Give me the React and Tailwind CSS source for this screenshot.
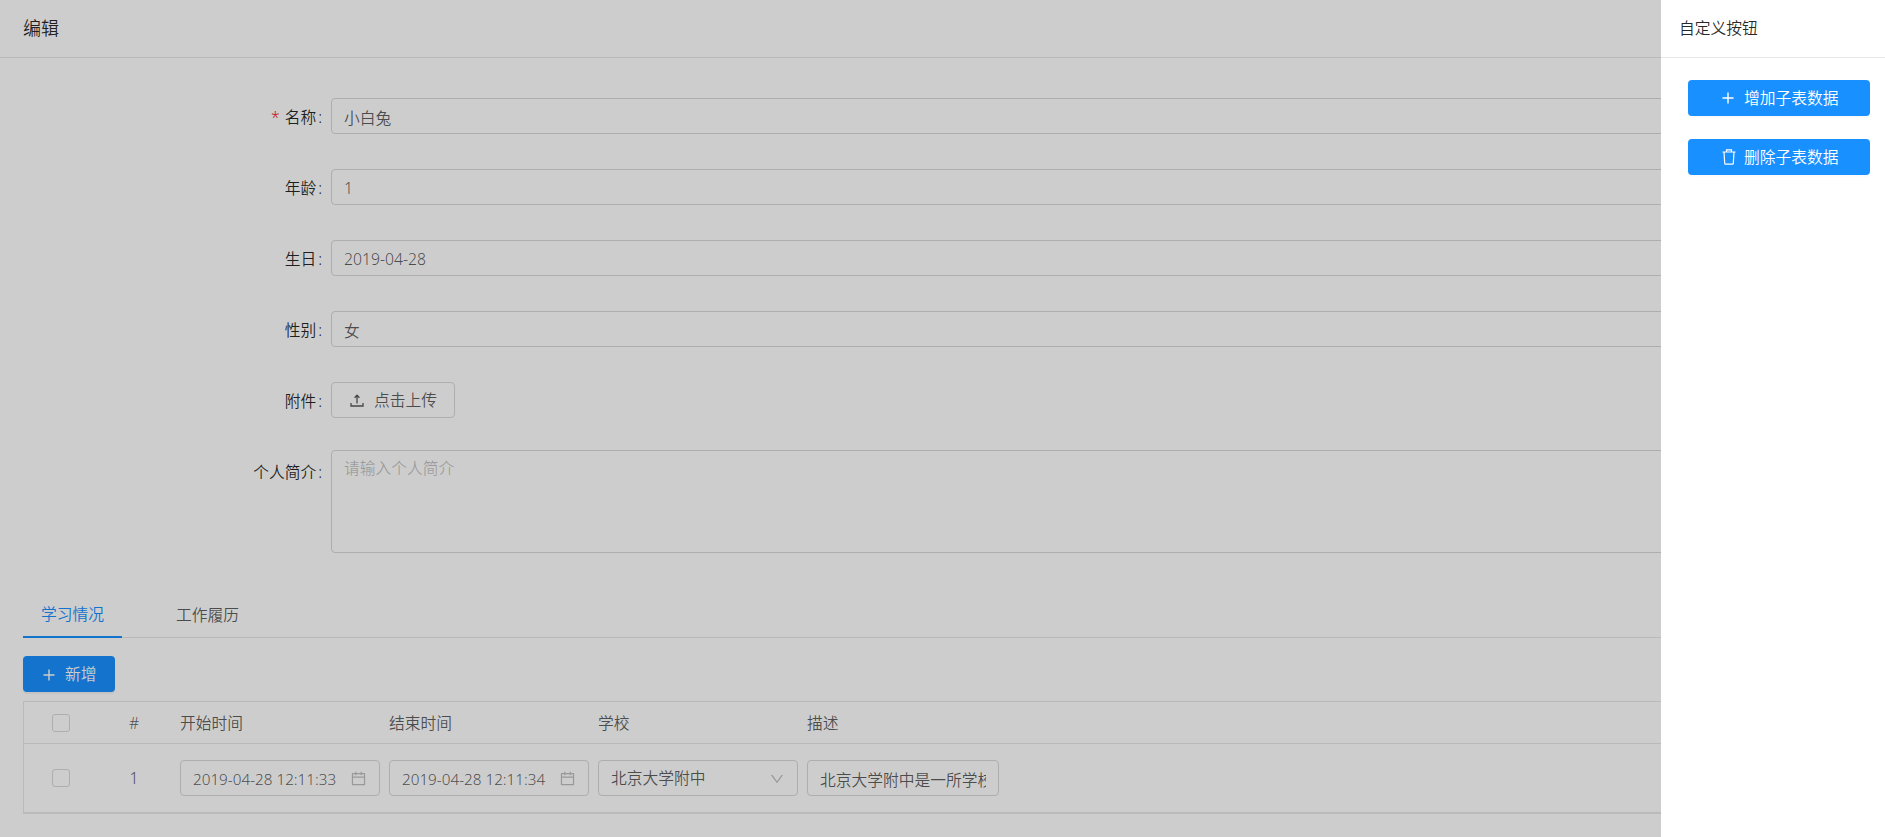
import React from 'react'
import { AiOutlineCalendar, AiOutlineDown } from 'react-icons/ai'

const font = 'font-["Noto_Sans","Noto_Sans_CJK_SC",sans-serif]'
const fields = [
  { label: '名称', value: '小白兔', required: true },
  { label: '年龄', value: '1' },
  { label: '生日', value: '2019-04-28' },
  { label: '性别', value: '女' },
]

function PlusIcon({ className }) {
  return (
    <svg viewBox="0 0 12 12" className={className} fill="none" stroke="currentColor" strokeWidth="1.4">
      <path d="M6 0.5v11M0.5 6h11" />
    </svg>
  )
}

function UploadIcon({ className }) {
  return (
    <svg viewBox="0 0 14 13" className={className} fill="none" stroke="currentColor" strokeWidth="1.3">
      <path d="M7 9.5V1.5M4.6 3.8L7 1.2l2.4 2.6M1 9v3h12V9" />
    </svg>
  )
}

function TrashIcon({ className }) {
  return (
    <svg viewBox="0 0 14 16" className={className} fill="none" stroke="currentColor" strokeWidth="1.2">
      <path d="M0.5 3h13M4.5 3V0.9h5V3M2 3l0.7 11.2c0 0.5 0.4 0.9 0.9 0.9h6.8c0.5 0 0.9-0.4 0.9-0.9L12 3" />
    </svg>
  )
}

function Label({ text, required, className = '' }) {
  return (
    <label className={`h-9 w-[308px] shrink-0 pr-[9px] text-right text-[15.75px] leading-[38px] text-black/85 ${className}`}>
      {required && <span className="mr-[5px] text-[#f5222d]">*</span>}
      {text}
      <span className="ml-[2px]">:</span>
    </label>
  )
}

function Cell({ children, width = 'w-[200px]', size = 'text-[15.75px]' }) {
  return (
    <div className={`${width} ${size} flex h-9 shrink-0 items-center rounded-[4px] border border-[#d9d9d9] px-[12px] pt-[2px] text-black/65`}>
      {children}
    </div>
  )
}

function DateCell({ value }) {
  return (
    <Cell size="text-[15.25px]">
      <span className="flex-1 whitespace-nowrap">{value}</span>
      <AiOutlineCalendar className="-mt-[2px] size-[17px] shrink-0 text-black/25" />
    </Cell>
  )
}

function Checkbox() {
  return <span className="block size-[18px] rounded-[3px] border border-[#d9d9d9]" />
}

function Action({ icon, text }) {
  return (
    <button className="flex h-9 w-[182px] items-center rounded-[4px] bg-[#1890ff] pl-[33px] pt-[2px] text-[15.75px] text-white shadow-[0_2px_0_rgba(0,0,0,0.015)]">
      <span className="-mt-[2px] flex w-[23px] shrink-0 pl-[1px]">{icon}</span>
      {text}
    </button>
  )
}

export default function App() {
  return (
    <div className={`relative h-[837px] overflow-hidden bg-white font-[350] ${font}`}>
      {/* Page behind the drawer */}
      <div className="flex h-[58px] items-center border-b border-[#e8e8e8] px-[23px] text-[18px] text-black/85">编辑</div>

      <div className="px-[23px] pt-[40px]">
        <div className="flex flex-col gap-[35px]">
          {fields.map(f => (
            <div key={f.label} className="flex">
              <Label text={f.label} required={f.required} />
              <input readOnly value={f.value}
                className="h-9 flex-1 rounded-[4px] border border-[#d9d9d9] px-[12px] pt-[2px] text-[15.75px] text-black/65 outline-none" />
            </div>
          ))}
          <div className="flex">
            <Label text="附件" />
            <button className="flex h-9 w-[124px] items-center rounded-[4px] border border-[#d9d9d9] pl-[18px] pt-[1px] text-[15.75px] text-black/65">
              <UploadIcon className="mr-[10px] h-[13px] w-[14px]" />
              点击上传
            </button>
          </div>
        </div>

        <div className="mt-[32px] flex">
          <Label text="个人简介" className="pt-[3px]" />
          <textarea readOnly placeholder="请输入个人简介"
            className="h-[103px] flex-1 resize-none rounded-[4px] border border-[#d9d9d9] px-[12px] py-[6px] text-[15.75px] outline-none placeholder:text-black/25" />
        </div>

        {/* Tabs */}
        <div className="mt-[34px] flex h-[51px] gap-[36px] border-b border-[#e8e8e8] text-[15.75px]">
          <div className="-mb-px flex w-[99px] items-center justify-center border-b-2 border-[#1890ff] pt-[7px] text-[#1890ff]">学习情况</div>
          <div className="flex w-[99px] items-center justify-center pt-[7px] text-black/65">工作履历</div>
        </div>

        <button className="mt-[18px] flex h-9 w-[92px] items-center rounded-[4px] bg-[#1890ff] pl-[20px] pt-[1px] text-[15.75px] text-white shadow-[0_2px_0_rgba(0,0,0,0.045)]">
          <PlusIcon className="mr-[10px] size-[12px]" />
          新增
        </button>

        {/* Sub table */}
        <div className="mt-[9px] border border-b-2 border-[#e8e8e8] text-[15.75px] text-black/65">
          <div className="flex h-[42px] items-center border-b border-[#e8e8e8] pt-[3px]">
            <div className="-mt-[3px] flex w-[70px] shrink-0 justify-center pl-[3px]"><Checkbox /></div>
            <div className="w-[80px] shrink-0 text-center">#</div>
            <div className="w-[6px] shrink-0" />
            <div className="w-[209px] shrink-0">开始时间</div>
            <div className="w-[209px] shrink-0">结束时间</div>
            <div className="w-[209px] shrink-0">学校</div>
            <div>描述</div>
          </div>
          <div className="flex h-[68px] items-center">
            <div className="flex w-[70px] shrink-0 justify-center pl-[3px]"><Checkbox /></div>
            <div className="w-[80px] shrink-0 pt-[2px] text-center">1</div>
            <div className="w-[6px] shrink-0" />
            <div className="flex gap-[9px]">
              <DateCell value="2019-04-28 12:11:33" />
              <DateCell value="2019-04-28 12:11:34" />
              <Cell>
                <span className="flex-1">北京大学附中</span>
                <AiOutlineDown className="size-[16px] text-black/25" />
              </Cell>
              <input readOnly value="北京大学附中是一所学校"
                className="h-9 w-[192px] rounded-[4px] border border-[#d9d9d9] px-[12px] pt-[2px] text-[15.75px] text-black/65 outline-none" />
            </div>
          </div>
        </div>
      </div>

      {/* Drawer mask */}
      <div className="absolute inset-0 bg-black/[0.195]" />

      {/* Drawer */}
      <div className="absolute inset-y-0 right-0 w-[224px] bg-white">
        <div className="flex h-[58px] items-center border-b border-[#e8e8e8] pl-[18px] text-[15.75px] text-black/85">自定义按钮</div>
        <div className="flex flex-col gap-[23px] pl-[27px] pt-[22px]">
          <Action icon={<PlusIcon className="size-[12px]" />} text="增加子表数据" />
          <Action icon={<TrashIcon className="h-[16px] w-[14px]" />} text="删除子表数据" />
        </div>
      </div>
    </div>
  )
}
